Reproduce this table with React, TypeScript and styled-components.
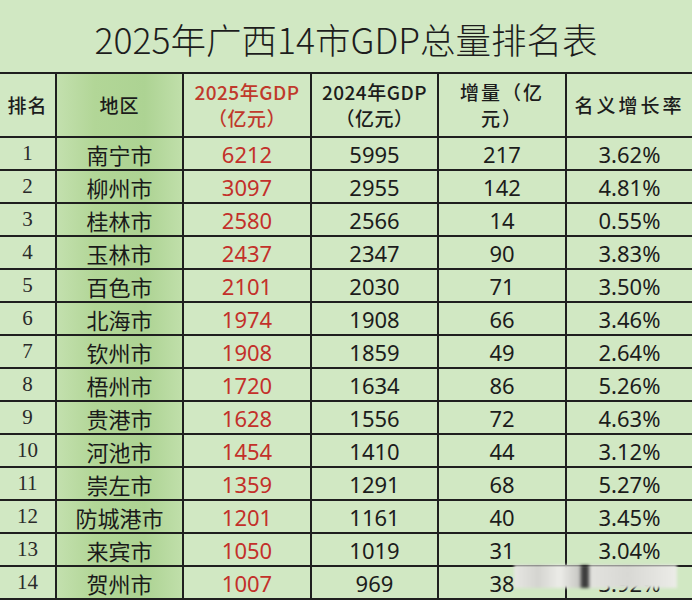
import React from "react";
import styled, { createGlobalStyle } from "styled-components";

const Global = createGlobalStyle`
  html, body { margin: 0; padding: 0; background: #d1e8c3; }
  body { font-family: "Noto Sans CJK SC", "Noto Sans", sans-serif; overflow: hidden; }
`;

const Page = styled.div`
  width: 692px;
  height: 600px;
  background: #d1e8c3;
  position: relative;
  overflow: hidden;
`;

const Title = styled.h1`
  margin: 0;
  height: 72px;
  display: flex;
  align-items: center;
  justify-content: center;
  padding-top: 4px;
  box-sizing: border-box;
  font-family: "Noto Sans CJK SC", sans-serif;
  font-weight: 300;
  font-size: 35.5px;
  color: #1d1d1d;
`;

const Grid = styled.div`
  display: grid;
  grid-template-columns: 57px 127px 128px 127px 128px 125px;
  grid-template-rows: 64px repeat(14, 33px);
  border-top: 2px solid #1f1f1f;
`;

const Cell = styled.div<{ $region?: boolean; $last?: boolean }>`
  box-sizing: border-box;
  display: flex;
  align-items: center;
  justify-content: center;
  text-align: center;
  border-bottom: 2px solid #1f1f1f;
  border-right: ${(p) => (p.$last ? "none" : "2px solid #1f1f1f")};
  background: ${(p) =>
    p.$region
      ? "linear-gradient(90deg, #c3e0ae 0%, #b2d697 30%, #add393 70%, #c0dfaa 100%)"
      : "transparent"};
  color: #1c1c1c;
  overflow: hidden;
  white-space: nowrap;
`;

const HeadText = styled.span<{ $red?: boolean; $spacing?: number }>`
  font-family: "Noto Sans CJK SC", sans-serif;
  font-weight: 500;
  font-size: 19px;
  line-height: 26px;
  letter-spacing: ${(p) => p.$spacing ?? 2}px;
  color: ${(p) => (p.$red ? "#c0392b" : "#1c1c1c")};
`;

const Rank = styled.span`
  font-family: "Liberation Serif", serif;
  font-size: 21px;
  color: #2a2a2a;
`;

const City = styled.span`
  font-family: "Noto Sans CJK SC", sans-serif;
  font-size: 22px;
  color: #1a1a1a;
`;

const Num = styled.span<{ $red?: boolean }>`
  font-family: "Noto Sans", "Open Sans", sans-serif;
  font-size: 22px;
  color: ${(p) => (p.$red ? "#c3302a" : "#1c1c1c")};
`;

const Watermark = styled.div`
  position: absolute;
  left: 514px;
  top: 565px;
  width: 163px;
  height: 23px;
  background: linear-gradient(
    90deg,
    #e6e6e2 0%,
    #d4d4d0 15%,
    #ececE8 28%,
    #c8c8c4 40%,
    #3c3c3c 42%,
    #3c3c3c 45%,
    #e2e2de 47%,
    #d8d8d4 70%,
    #ececE8 100%
  );
  filter: blur(1.5px);
`;

type Row = [string, string, string, string, string, string];

const rows: Row[] = [
  ["1", "南宁市", "6212", "5995", "217", "3.62%"],
  ["2", "柳州市", "3097", "2955", "142", "4.81%"],
  ["3", "桂林市", "2580", "2566", "14", "0.55%"],
  ["4", "玉林市", "2437", "2347", "90", "3.83%"],
  ["5", "百色市", "2101", "2030", "71", "3.50%"],
  ["6", "北海市", "1974", "1908", "66", "3.46%"],
  ["7", "钦州市", "1908", "1859", "49", "2.64%"],
  ["8", "梧州市", "1720", "1634", "86", "5.26%"],
  ["9", "贵港市", "1628", "1556", "72", "4.63%"],
  ["10", "河池市", "1454", "1410", "44", "3.12%"],
  ["11", "崇左市", "1359", "1291", "68", "5.27%"],
  ["12", "防城港市", "1201", "1161", "40", "3.45%"],
  ["13", "来宾市", "1050", "1019", "31", "3.04%"],
  ["14", "贺州市", "1007", "969", "38", "3.92%"],
];

export default function App() {
  return (
    <Page>
      <Global />
      <Title>2025年广西14市GDP总量排名表</Title>
      <Grid>
        <Cell>
          <HeadText $spacing={1}>排名</HeadText>
        </Cell>
        <Cell $region>
          <HeadText $spacing={1}>地区</HeadText>
        </Cell>
        <Cell>
          <HeadText $red $spacing={0.5}>
            2025年GDP
            <br />
            （亿元）
          </HeadText>
        </Cell>
        <Cell>
          <HeadText $spacing={0.5}>
            2024年GDP
            <br />
            （亿元）
          </HeadText>
        </Cell>
        <Cell>
          <HeadText $spacing={2}>
            增量（亿
            <br />
            元）
          </HeadText>
        </Cell>
        <Cell $last>
          <HeadText $spacing={3}>名义增长率</HeadText>
        </Cell>
        {rows.map((r) => (
          <React.Fragment key={r[0]}>
            <Cell>
              <Rank>{r[0]}</Rank>
            </Cell>
            <Cell $region>
              <City>{r[1]}</City>
            </Cell>
            <Cell>
              <Num $red>{r[2]}</Num>
            </Cell>
            <Cell>
              <Num>{r[3]}</Num>
            </Cell>
            <Cell>
              <Num>{r[4]}</Num>
            </Cell>
            <Cell $last>
              <Num>{r[5]}</Num>
            </Cell>
          </React.Fragment>
        ))}
      </Grid>
      <Watermark />
    </Page>
  );
}
